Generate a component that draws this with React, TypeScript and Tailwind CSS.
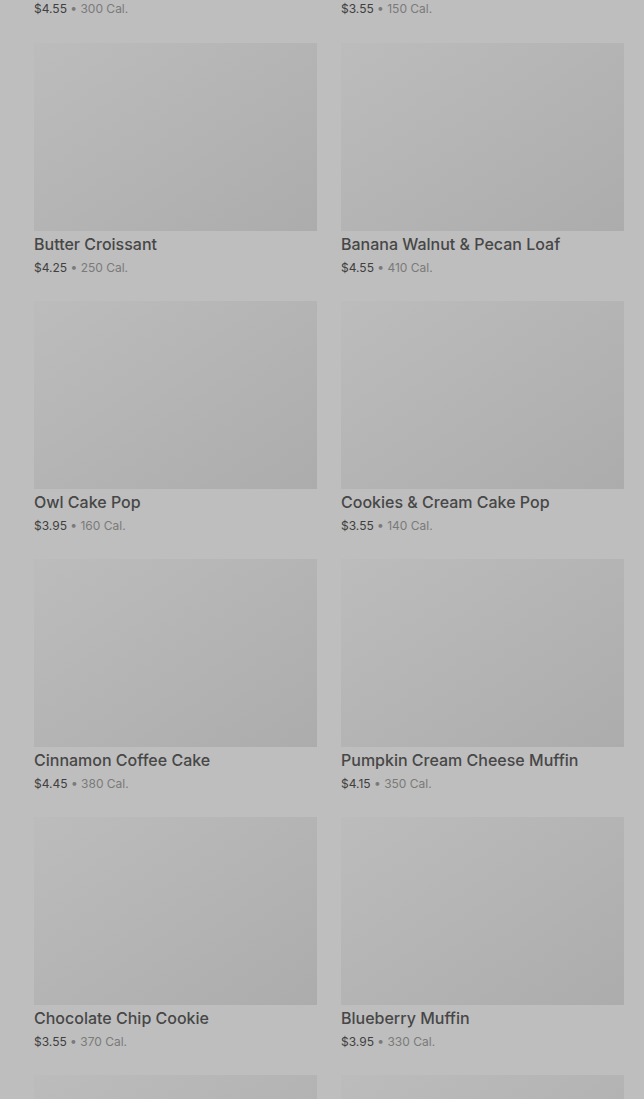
const items = [
  { name: 'Butter Croissant', price: '$4.25', cal: '250 Cal.' },
  { name: 'Banana Walnut & Pecan Loaf', price: '$4.55', cal: '410 Cal.' },
  { name: 'Owl Cake Pop', price: '$3.95', cal: '160 Cal.' },
  { name: 'Cookies & Cream Cake Pop', price: '$3.55', cal: '140 Cal.' },
  { name: 'Cinnamon Coffee Cake', price: '$4.45', cal: '380 Cal.' },
  { name: 'Pumpkin Cream Cheese Muffin', price: '$4.15', cal: '350 Cal.' },
  { name: 'Chocolate Chip Cookie', price: '$3.55', cal: '370 Cal.' },
  { name: 'Blueberry Muffin', price: '$3.95', cal: '330 Cal.' },
];

function Price({ price, cal }: { price: string; cal: string }) {
  return (
    <p className="text-[12px] leading-5">
      <span className="text-[#404040]">{price}</span>
      <span className="text-[#7a7a7a]"> • {cal}</span>
    </p>
  );
}

function Thumb() {
  return <div className="h-[188px] w-full bg-gradient-to-br from-[#bcbcbc] to-[#acacac]" />;
}

export default function App() {
  return (
    <div
      className="min-h-screen overflow-hidden bg-[#bebebe] pl-[34px] pr-[20px]"
      style={{ fontFamily: 'Inter, "Open Sans", sans-serif' }}
    >
      {/* partially scrolled row */}
      <div className="-mt-px grid grid-cols-2 gap-x-6">
        <Price price="$4.55" cal="300 Cal." />
        <Price price="$3.55" cal="150 Cal." />
      </div>

      <div className="mt-6 grid grid-cols-2 gap-x-6 gap-y-[23px]">
        {items.map((item) => (
          <div key={item.name}>
            <Thumb />
            <h3 className="mt-px text-[16px] leading-6 font-medium text-[#474747]">{item.name}</h3>
            <div className="mt-[2px]">
              <Price price={item.price} cal={item.cal} />
            </div>
          </div>
        ))}
        <Thumb />
        <Thumb />
      </div>
    </div>
  );
}
